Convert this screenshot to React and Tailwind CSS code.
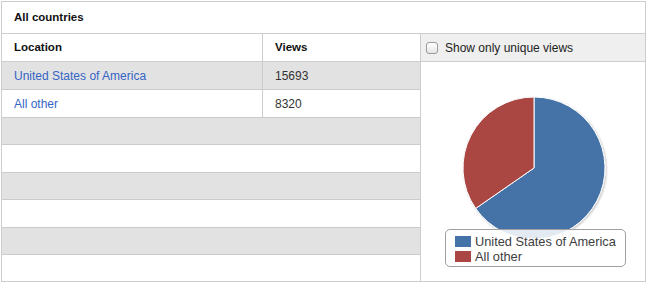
import React from "react";

const rows = [
  { h: "h-[28px]", bg: "bg-[#e2e2e2]", loc: "United States of America", views: "15693" },
  { h: "h-[28px]", bg: "bg-white", loc: "All other", views: "8320" },
  { h: "h-[27px]", bg: "bg-[#e2e2e2]" },
  { h: "h-[28px]", bg: "bg-white" },
  { h: "h-[27px]", bg: "bg-[#e2e2e2]" },
  { h: "h-[28px]", bg: "bg-white" },
  { h: "h-[27px]", bg: "bg-[#e2e2e2]" },
  { h: "flex-1", bg: "bg-white", last: true },
];

function Pie() {
  const cx = 113;
  const cy = 106;
  const r = 71;
  const frac = 15693 / (15693 + 8320);
  const a = frac * 2 * Math.PI;
  const px = cx + r * Math.sin(a);
  const py = cy - r * Math.cos(a);
  const blue = `M ${cx} ${cy} L ${cx} ${cy - r} A ${r} ${r} 0 1 1 ${px} ${py} Z`;
  const red = `M ${cx} ${cy} L ${px} ${py} A ${r} ${r} 0 0 1 ${cx} ${cy - r} Z`;
  return (
    <svg width="224" height="218" viewBox="0 0 224 218" className="block">
      <defs>
        <filter id="sh" x="-20%" y="-20%" width="140%" height="140%">
          <feGaussianBlur in="SourceAlpha" stdDeviation="1.2" />
          <feOffset dx="1" dy="1" result="b" />
          <feComponentTransfer>
            <feFuncA type="linear" slope="0.25" />
          </feComponentTransfer>
          <feMerge>
            <feMergeNode />
            <feMergeNode in="SourceGraphic" />
          </feMerge>
        </filter>
      </defs>
      <g filter="url(#sh)">
        <path d={blue} fill="#4572A7" stroke="#ffffff" strokeWidth="1" strokeLinejoin="round" />
        <path d={red} fill="#AA4643" stroke="#ffffff" strokeWidth="1" strokeLinejoin="round" />
      </g>
    </svg>
  );
}

export default function App() {
  return (
    <div className="w-[650px] h-[282px] bg-white pt-px pl-px font-['Liberation_Sans',Arial,sans-serif] text-[12px] text-[#222]">
      <div className="w-[645px] h-[281px] border border-[#cdcdcd] flex flex-col">
        <div className="h-[32px] shrink-0 border-b border-[#cdcdcd] flex items-center pl-[12px] font-bold text-[11.5px] text-[#111]">
          All countries
        </div>
        <div className="flex flex-1 min-h-0">
          <div className="w-[419px] shrink-0 border-r border-[#cdcdcd] flex flex-col">
            <div className="h-[28px] shrink-0 border-b border-[#cdcdcd] flex font-bold text-[11.5px] text-[#111]">
              <div className="w-[261px] border-r border-[#cdcdcd] flex items-center pl-[12px]">Location</div>
              <div className="flex-1 flex items-center pl-[12px]">Views</div>
            </div>
            {rows.map((r, i) => (
              <div
                key={i}
                className={`${r.h} ${r.bg} shrink-0 flex ${r.last ? "" : "border-b border-[#cbcbcb]"}`}
              >
                {r.loc ? (
                  <>
                    <div className="w-[261px] border-r border-[#cdcdcd] flex items-center pl-[12px] text-[#3465c5]">
                      {r.loc}
                    </div>
                    <div className="flex-1 flex items-center pl-[12px] text-[#333]">{r.views}</div>
                  </>
                ) : null}
              </div>
            ))}
          </div>
          <div className="flex-1 flex flex-col">
            <div className="h-[28px] shrink-0 border-b border-[#cdcdcd] bg-[#efefef] flex items-center pl-[5px] gap-[7px] text-[#222]">
              <div className="w-[12px] h-[12px] rounded-[3px] border border-[#9a9a9a] bg-gradient-to-b from-white to-[#e6e6e6]" />
              <span>Show only unique views</span>
            </div>
            <div className="relative flex-1 bg-white">
              <Pie />
              <div className="absolute left-[24px] top-[167px] w-[181px] h-[38px] rounded-[5px] border border-[#a0a0a0] bg-white/85 pl-[9px] pt-[4px] text-[12.8px] text-[#3e3e3e] leading-[15px]">
                <div className="flex items-center gap-[4px]">
                  <span className="w-[16px] h-[11px] bg-[#4572A7]" />
                  <span>United States of America</span>
                </div>
                <div className="flex items-center gap-[4px]">
                  <span className="w-[16px] h-[11px] bg-[#AA4643]" />
                  <span>All other</span>
                </div>
              </div>
            </div>
          </div>
        </div>
      </div>
    </div>
  );
}
